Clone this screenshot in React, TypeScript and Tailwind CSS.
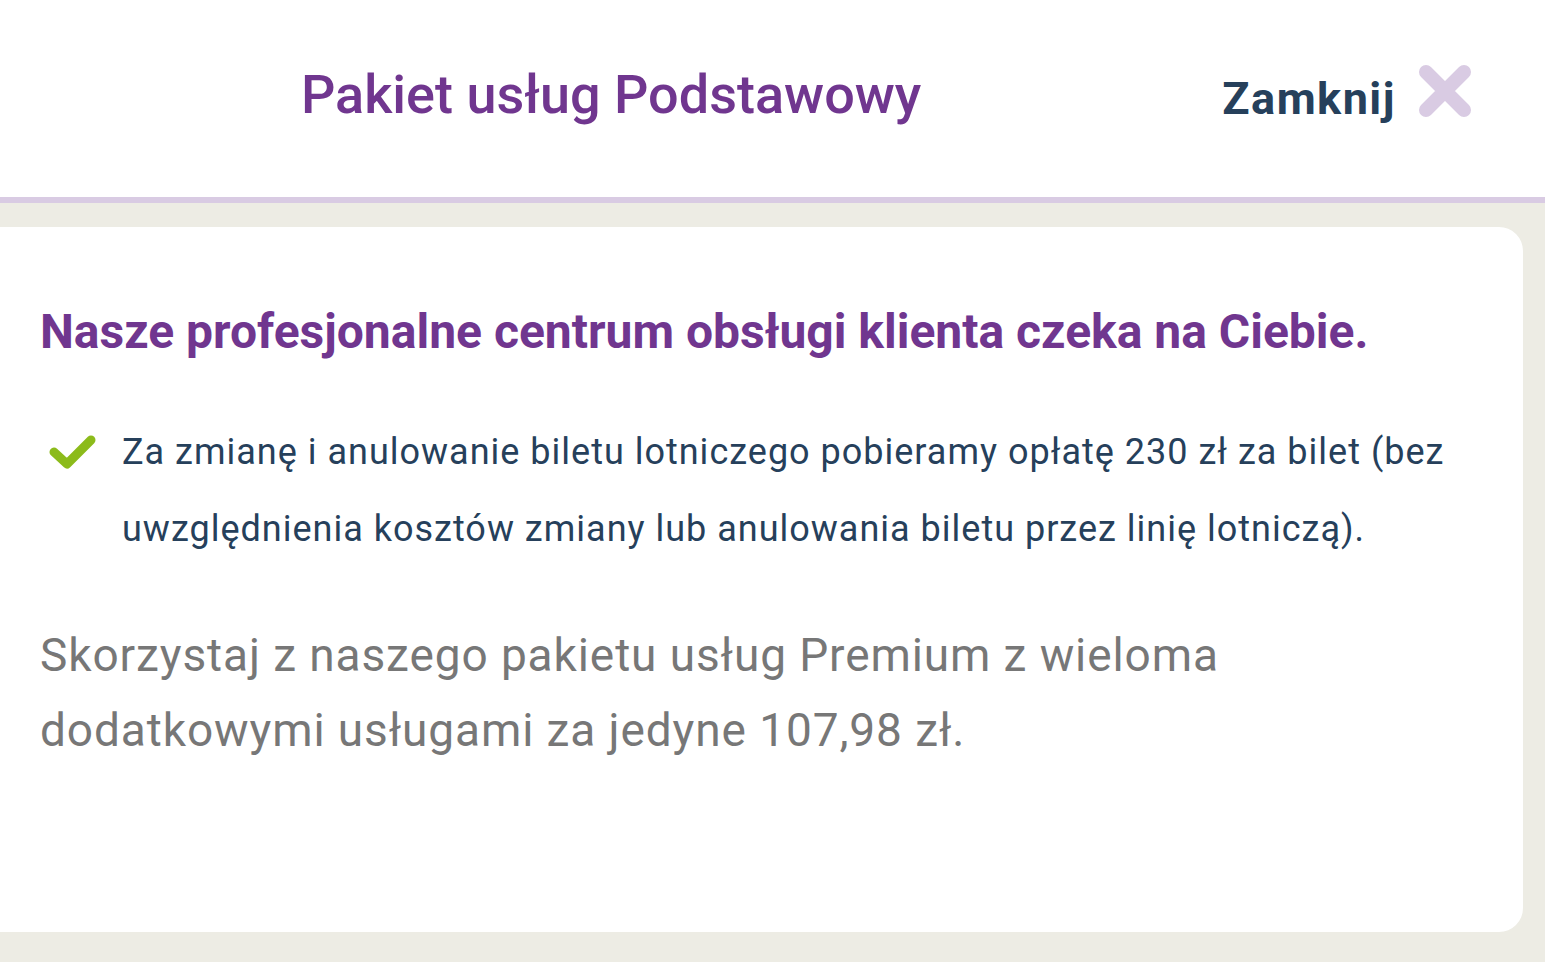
import React from "react";

const CloseIcon = () => (
  <svg width="54" height="54" viewBox="0 0 54 54" fill="none">
    <path
      d="M8 8 L46 46 M46 8 L8 46"
      stroke="#d9cbe3"
      strokeWidth="14"
      strokeLinecap="round"
    />
  </svg>
);

const CheckIcon = () => (
  <svg width="48" height="40" viewBox="0 0 48 40" fill="none">
    <path
      d="M5 18 L18 30 L42 6"
      stroke="#8cbb1b"
      strokeWidth="9"
      strokeLinecap="round"
      strokeLinejoin="round"
    />
  </svg>
);

const App = () => {
  return (
    <div
      className="min-h-[962px] bg-[#edece4] flex flex-col"
      style={{ fontFamily: "Roboto, 'Noto Sans', sans-serif" }}
    >
      <header className="h-[203px] bg-white border-b-[6px] border-[#d9cbe3] flex items-center pr-[73px]">
        <h1 className="flex-1 text-center text-[54px] font-medium text-[#70368f] mb-[8px]">
          Pakiet usług Podstawowy
        </h1>
        <button className="flex items-center gap-[22px]">
          <span className="text-[45px] font-bold tracking-[1.5px] text-[#26405b]">Zamknij</span>
          <span className="mb-[16px]">
            <CloseIcon />
          </span>
        </button>
      </header>
      <div className="pt-[24px] pr-[22px] pb-[30px]">
        <div className="bg-white rounded-r-[24px] h-[705px] pl-[40px] pr-[40px] pt-[76px]">
          <h2 className="text-[48px] leading-[1.2] font-bold text-[#70368f]">
            Nasze profesjonalne centrum obsługi klienta czeka na Ciebie.
          </h2>
          <ul className="mt-[53px]">
            <li className="flex">
              <span className="w-[82px] shrink-0 pl-[9px] pt-[20px]">
                <CheckIcon />
              </span>
              <span className="text-[36px] leading-[77px] tracking-[1px] text-[#26405b]">
                Za zmianę i anulowanie biletu lotniczego pobieramy opłatę 230 zł za bilet (bez
                uwzględnienia kosztów zmiany lub anulowania biletu przez linię lotniczą).
              </span>
            </li>
          </ul>
          <p className="mt-[50px] max-w-[1400px] text-[46px] leading-[75px] tracking-[0.9px] text-[#777777]">
            Skorzystaj z naszego pakietu usług Premium z wieloma dodatkowymi usługami za jedyne
            107,98 zł.
          </p>
        </div>
      </div>
    </div>
  );
};

export default App;
